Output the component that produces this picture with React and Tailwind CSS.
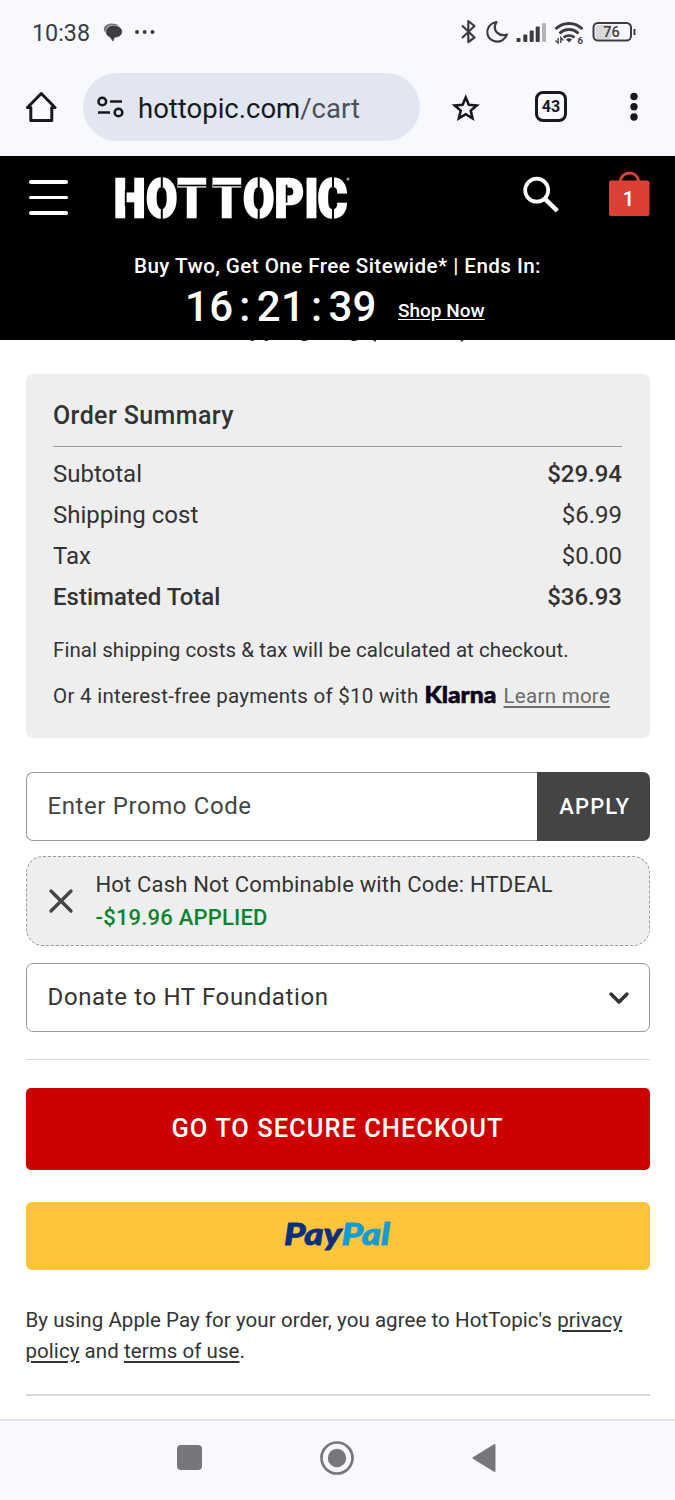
import React from 'react'

const totals = [
    { label: 'Subtotal', value: '$29.94', valueClass: 'font-medium' },
    { label: 'Shipping cost', value: '$6.99', valueClass: '' },
    { label: 'Tax', value: '$0.00', valueClass: '' },
    { label: 'Estimated Total', value: '$36.93', labelClass: 'font-medium', valueClass: 'font-medium' },
]

const StatusBar = () => (
    <div className="h-16 flex items-center pl-8 pr-[39px] text-[#3c3c40]">
        <span className="mt-px text-[23.300px] leading-8 w-[58px] whitespace-nowrap">10:38</span>
        <svg className="ml-[13px] w-5 h-5" viewBox="0 0 20 20" fill="currentColor">
            <path d="M1 6C2 3 5 1.500 8.500 1.500C12 1.500 14.500 2.200 16 3.800C12 2.600 7 2.600 4.500 5C3 6.500 2.300 8 2.500 10.500C1 9.500 .5 7.500 1 6Z" opacity=".7" />
            <path d="M10.500 3.800C15.500 3.800 18.800 6.200 18.800 9.800C18.800 13 16 15.200 11.500 15.200L10 19L7 15C4.200 13.800 3.200 12 3.200 9.800C3.200 6.200 6 3.800 10.500 3.800Z" stroke="currentColor" strokeLinejoin="round" strokeWidth=".6" />
        </svg>
        <svg className="ml-[11px] w-[22px] h-5" viewBox="0 0 22 20" fill="currentColor">
            <circle cx="3" cy="10" r="2" />
            <circle cx="10.700" cy="10" r="2" />
            <circle cx="18.500" cy="10" r="2" />
        </svg>
        <svg className="ml-auto w-[176px] h-8" viewBox="460 16 176 32" fill="none" stroke="currentColor" strokeWidth="2.200">
            <path d="M462 25.500L474.500 37.500L468.300 42V21L474.500 26L462 38" strokeLinejoin="round" />
            <path d="M496.500 22C489 23.500 486.500 29.500 487.500 34C489 41 496.500 43 502 40.500C504.500 39 506.200 37 507 34.500C499 37 491.500 30.500 496.500 22Z" strokeLinejoin="round" />
            <g fill="currentColor" stroke="none">
                <rect x="516.500" y="38" width="4" height="4" rx="1" />
                <rect x="523.300" y="34.500" width="4" height="7.500" rx="1" />
                <rect x="529.700" y="30.500" width="4" height="11.500" rx="1" />
                <rect x="535.700" y="26.500" width="4" height="15.500" rx="1" />
                <rect x="542" y="23" width="4" height="19" rx="1" fill="#b2b2b7" />
            </g>
            <g strokeWidth="3">
                <path d="M555.500 29C563 21.500 575 21.500 582.500 29" />
                <path d="M559.500 33.500C565 28.300 573 28.300 578.500 33.500" />
                <path d="M563.500 37.500C566.500 34.800 571.500 34.800 574.500 37.500" strokeWidth="2.500" />
            </g>
            <path d="M566 39.500C567.500 37.800 570.500 37.800 572 39.500L569 42.500Z" fill="currentColor" stroke="none" />
            <path d="M558.200 38V43L555.500 40.500M560.800 43V37.500L563.300 40.500" strokeWidth="1.300" />
            <text x="577.500" y="43.500" fontSize="9.500" fontWeight="700" fill="currentColor" stroke="none">6</text>
            <rect x="595.500" y="25" width="16" height="14" rx="2" fill="#d8d8dc" stroke="none" />
            <rect x="593.500" y="23" width="37.500" height="17.500" rx="4.500" strokeWidth="2" />
            <path d="M634.500 29V35" strokeWidth="2" />
            <text x="603.300" y="37" fontSize="14.500" fontWeight="500" fill="currentColor" stroke="none">76</text>
        </svg>
    </div>
)

const BrowserBar = () => (
    <div className="h-[92px] flex items-start pt-[9px] pl-[25px] text-[#17191d]">
        <svg className="w-8 h-[34px] mt-[17px]" viewBox="0 0 32 34" fill="none" stroke="currentColor" strokeWidth="3" strokeLinejoin="round" strokeLinecap="round">
            <path d="M2.500 17.500L16.300 3.500L30 17.500H26.800V30.500H5.800V17.500Z" />
        </svg>
        <div className="ml-[26px] w-[337px] h-[68px] rounded-full bg-[#e1e6f1] flex items-center pl-[14px]">
            <svg className="w-7 h-6" viewBox="0 0 28 24" fill="none" stroke="currentColor" strokeWidth="2.600">
                <circle cx="5.300" cy="6.500" r="3.800" />
                <path d="M13 6.500H25M1 17.500H13" />
                <circle cx="21.500" cy="17.500" r="3.800" />
            </svg>
            <span className="ml-[13px] mt-[3px] text-[27.500px] leading-8 whitespace-nowrap">
                hottopic.com<span className="text-[#4c5059]">/cart</span>
            </span>
        </div>
        <svg className="ml-[31px] mt-5 w-[30px] h-[30px]" viewBox="0 0 30 30" fill="none" stroke="currentColor" strokeWidth="2.600">
            <path d="M14.700 4.500L17.800 11.700L25.700 12.400L19.700 17.600L21.500 25.300L14.700 21.200L7.900 25.300L9.700 17.600L3.700 12.400L11.600 11.700Z" />
        </svg>
        <div className="ml-[54px] mt-[18px] w-8 h-[31px] rounded-[8px] border-[3px] border-current flex items-center justify-center text-base font-bold">
            43
        </div>
        <svg className="ml-[62.500px] mt-[18px] w-2 h-8" viewBox="0 0 8 32" fill="currentColor">
            <circle cx="4" cy="5.500" r="3.700" />
            <circle cx="4" cy="15.700" r="3.700" />
            <circle cx="4" cy="26" r="3.700" />
        </svg>
    </div>
)

const Logo = () => (
    <svg className="ml-[46px] mt-[19px] w-[236px] h-[46px] overflow-visible" viewBox="114 175 236 46" fill="white">
        <text
            transform="scale(.82 1)"
            x="139 178.500 216.800 250 259.500 296.700 335 371.800 387.400"
            y="216.700"
            fontWeight="900"
            fontSize="54.500"
            stroke="white"
            strokeWidth="2.600"
        >
            HOT TOPIC
        </text>
        {/* stencil cuts */}
        <g fill="black">
            <rect x="124.800" y="190" width="1.800" height="16" />
            <rect x="160.800" y="175" width="2" height="12" />
            <rect x="160.800" y="208" width="2" height="12" />
            <rect x="178" y="184.700" width="29" height="1.600" />
            <rect x="213" y="184.700" width="29" height="1.600" />
            <rect x="257.700" y="175" width="2" height="12" />
            <rect x="257.700" y="208" width="2" height="12" />
            <rect x="285.800" y="184.700" width="1.600" height="18" />
            <rect x="332" y="175" width="2" height="12" />
            <rect x="332" y="208" width="2" height="12" />
        </g>
        <circle cx="348" cy="179" r="1.500" fill="#999" />
    </svg>
)

const SiteHeader = () => (
    <header className="h-[184px] bg-black text-white">
        <div className="h-[87px] flex items-start">
            <div className="ml-[29px] mt-6 w-[39px] flex flex-col gap-3">
                <span className="h-[3.500px] rounded-full bg-white" />
                <span className="h-[3.500px] rounded-full bg-white" />
                <span className="h-[3.500px] rounded-full bg-white" />
            </div>
            <Logo />
            <svg className="ml-[173px] mt-5 w-[37px] h-[38px]" viewBox="523 176 37 38" fill="none" stroke="white">
                <circle cx="536.700" cy="190.200" r="11.500" strokeWidth="3.700" />
                <path d="M544.700 198.700L557.300 210.800" strokeWidth="4.500" />
            </svg>
            <svg className="ml-[48px] mt-[13px] w-[43px] h-[50px]" viewBox="608 169 43 50">
                <path d="M620.500 182C620.500 170 638.500 170 638.500 182" fill="none" stroke="#db4035" strokeWidth="3" />
                <rect x="609" y="180.500" width="40.500" height="35.500" rx="2" fill="#db4035" />
                <text x="628.500" y="205.500" textAnchor="middle" fontSize="21" fontWeight="500" fill="white">1</text>
            </svg>
        </div>
        <p className="h-[46px] pt-[9px] text-center text-[20.600px] leading-7 font-medium tracking-[0.440px] whitespace-nowrap">
            Buy Two, Get One Free Sitewide* | Ends In:
        </p>
        <div className="flex items-baseline pl-[185px] leading-[38px] -mt-px font-medium">
            <span className="w-[193px] text-[42px] whitespace-nowrap tracking-[0.300px]">
                16<span className="mx-[6px]">:</span>21<span className="mx-[6px]">:</span>39
            </span>
            <a className="ml-5 text-[19px] underline underline-offset-2 relative -top-[4px]">Shop Now</a>
        </div>
    </header>
)

const OrderSummary = () => (
    <section className="mt-[31px] h-[363.500px] rounded-[7px] bg-[#eee] px-[27.500px] pt-[26px] text-[#333]">
        <h2 className="h-[47px] border-b-[1.500px] border-[#999] text-[25px] leading-8 font-medium tracking-[0.400px]">Order Summary</h2>
        <div className="pt-[6.500px]">
            {totals.map((row) => (
                <div key={row.label} className="h-[41.200px] flex justify-between text-[24px] leading-10">
                    <span className={row.labelClass}>{row.label}</span>
                    <span className={row.valueClass}>{row.value}</span>
                </div>
            ))}
        </div>
        <p className="mt-[18px] text-[20.500px] leading-7 tracking-[0.060px] whitespace-nowrap">Final shipping costs &amp; tax will be calculated at checkout.</p>
        <p className="mt-[17.500px] text-[20.500px] leading-7 tracking-[0.280px] whitespace-nowrap flex">
            <span>Or 4 interest-free payments of $10 with</span>
            <svg className="ml-1 w-[76px] h-7 tracking-normal overflow-visible" viewBox="0 0 76 28">
                <text x="1.500" y="21" textLength="72" lengthAdjust="spacingAndGlyphs" fontFamily="Lato" fontWeight="900" fontSize="23.500" fill="#0b051d" stroke="#0b051d" strokeWidth=".6">Klarna</text>
            </svg>
            <a className="ml-[5px] text-[#6b6b6b] underline underline-offset-[3px]">Learn more</a>
        </p>
    </section>
)

const PayPalLogo = () => (
    <svg className="w-[110px] h-9 tracking-normal overflow-visible" viewBox="0 0 110 36">
        <text x="1" y="27" textLength="106" lengthAdjust="spacingAndGlyphs" fontFamily="Lato" fontStyle="italic" fontWeight="900" fontSize="31" strokeWidth=".8">
            <tspan fill="#0b2f7d" stroke="#0b2f7d">Pay</tspan><tspan fill="#129bd5" stroke="#129bd5">Pal</tspan>
        </text>
    </svg>
)

const App = () => {
    return (
        <div className="w-[675px] h-[1500px] overflow-hidden bg-white flex flex-col font-[Roboto,sans-serif]">
            <div className="h-[156px] bg-[#f8f9fe]">
                <StatusBar />
                <BrowserBar />
            </div>
            <SiteHeader />
            <main className="flex-1 px-[25.500px]">
                <div className="h-[3px] overflow-hidden flex flex-col justify-end text-center text-[25px] font-medium text-[#222]">
                    <h1 className="leading-7 h-7 shrink-0 mb-px">Shopping Bag (3 Items)</h1>
                </div>
                <OrderSummary />
                <div className="mt-[34.500px] h-[68.500px] flex">
                    <div className="flex-1 rounded-l-[7px] border-[1.500px] border-r-0 border-[#999] pl-[21px] text-[24px] leading-[66px] tracking-[0.600px] text-[#444]">
                        Enter Promo Code
                    </div>
                    <button className="w-[112.500px] rounded-r-[7px] bg-[#444] pl-[3px] text-white text-[22px] font-medium tracking-[1.100px]">APPLY</button>
                </div>
                <div className="mt-[15.500px] h-[90px] flex items-center rounded-[17px] border-[1.500px] border-dashed border-[#999] bg-[#eee] pl-[21.500px] text-[#333]">
                    <svg className="w-[26px] h-[26px]" viewBox="0 0 26 26" stroke="#444" strokeWidth="3.300" strokeLinecap="round">
                        <path d="M3 3L23 23M23 3L3 23" />
                    </svg>
                    <div className="ml-[21.500px] text-[22px] leading-[33px] whitespace-nowrap">
                        <p className="tracking-[0.180px]">Hot Cash Not Combinable with Code: HTDEAL</p>
                        <p className="font-medium tracking-[0.200px] text-[#0c842e]">-$19.96 APPLIED</p>
                    </div>
                </div>
                <div className="mt-[17px] h-[69px] flex items-center justify-between rounded-[7px] border-[1.500px] border-[#999] pl-[21px] pr-[19px] text-[24px] tracking-[0.640px] text-[#333]">
                    <span className="leading-8 mb-[2px]">Donate to HT Foundation</span>
                    <svg className="w-[22px] h-4" viewBox="0 0 22 16" fill="none" stroke="#333" strokeWidth="3.500" strokeLinejoin="round" strokeLinecap="round">
                        <path d="M3 4L11 12L19 4" />
                    </svg>
                </div>
                <hr className="mt-[27px] border-t-[1.500px] border-[#d9d9d9]" />
                <button className="mt-7 w-full h-[82px] pb-[2px] rounded-[5px] bg-[#cc0000] text-white text-[25.500px] font-medium tracking-[1px]">
                    GO TO SECURE CHECKOUT
                </button>
                <button className="mt-[32px] w-full h-[68px] rounded-[6px] bg-[#ffc43a] flex items-center justify-center">
                    <PayPalLogo />
                </button>
                <p className="mt-[34.500px] text-[20.500px] leading-[31px] tracking-[0.060px] text-[#333] whitespace-nowrap">
                    By using Apple Pay for your order, you agree to HotTopic's <a className="underline underline-offset-[3px]">privacy</a>
                    <br />
                    <a className="underline underline-offset-[3px]">policy</a> and <a className="underline underline-offset-[3px]">terms of use</a>.
                </p>
                <hr className="mt-[27px] border-t-2 border-[#d9d9d9]" />
            </main>
            <nav className="h-[81px] border-t-2 border-[#e3e5ec] bg-[#f8f9fe]">
                <div className="flex items-center h-[73px] pl-[177px] text-[#77777b]">
                    <span className="w-[25px] h-[25px] rounded-[4px] bg-current" />
                    <svg className="ml-[118px] w-[34px] h-[34px]" viewBox="0 0 34 34" fill="currentColor">
                        <circle cx="17" cy="17" r="15.500" fill="none" stroke="currentColor" strokeWidth="2.700" />
                        <circle cx="17" cy="17" r="9.200" />
                    </svg>
                    <svg className="ml-[117px] w-[26px] h-[30px]" viewBox="0 0 26 30" fill="currentColor" stroke="currentColor" strokeWidth="2" strokeLinejoin="round">
                        <path d="M2.500 15L23.500 2V28Z" />
                    </svg>
                </div>
            </nav>
        </div>
    )
}

export default App
